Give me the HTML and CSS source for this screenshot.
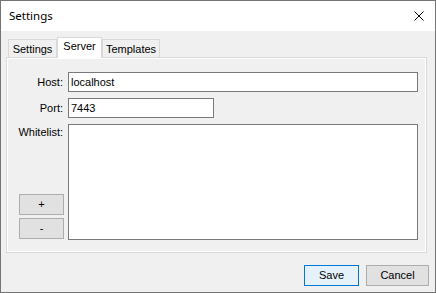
FILE: index.html
```html
<!DOCTYPE html>
<html>
<head>
<meta charset="utf-8">
<link rel="stylesheet" href="styles.css">
</head>
<body>
<div class="window">
  <div class="titlebar">
    <span class="title">Settings</span>
    <svg class="close" width="10" height="10" viewBox="0 0 10 10"><path d="M0.5 0.5L9.5 9.5M9.5 0.5L0.5 9.5" stroke="#000" stroke-width="1" fill="none"/></svg>
  </div>
  <div class="client">
    <div class="tabctl">
      <div class="tabstrip">
        <div class="tab tab-settings">Settings</div>
        <div class="tab tab-server active">Server</div>
        <div class="tab tab-templates">Templates</div>
      </div>
      <div class="panel">
        <div class="form">
          <label class="lbl">Host:</label>
          <input class="field host" type="text" value="localhost">
          <label class="lbl">Port:</label>
          <input class="field port" type="text" value="7443">
          <div class="wl-cell">
            <span class="wl-label">Whitelist:</span>
            <div class="wl-btns">
              <button class="btn small">+</button>
              <button class="btn small">-</button>
            </div>
          </div>
          <textarea class="field whitelist"></textarea>
        </div>
      </div>
    </div>
    <div class="footer">
      <button class="btn default save">Save</button>
      <button class="btn cancel">Cancel</button>
    </div>
  </div>
</div>
</body>
</html>
```
FILE: styles.css
```css
html, body {
  margin: 0;
  padding: 0;
  background: #ffffff;
}
* {
  box-sizing: border-box;
}
body {
  font-family: "Liberation Sans", Arial, sans-serif;
  font-size: 11px;
  color: #000;
}
.window {
  width: 436px;
  height: 293px;
  border: 1px solid #747474;
  display: flex;
  flex-direction: column;
  background: #f0f0f0;
}
.titlebar {
  height: 30px;
  background: #ffffff;
  display: flex;
  align-items: center;
  padding-left: 8px;
  padding-right: 11px;
}
.title {
  flex: 1;
  font-family: "Noto Sans", "Open Sans", sans-serif;
  font-size: 11.5px;
  line-height: 16px;
  margin-top: -1px;
}
.close {
  display: block;
  margin-top: -1px;
}
.client {
  flex: 1;
  display: flex;
  flex-direction: column;
  padding: 6px 6px 0 5px;
}
.tabctl {
  width: 421px;
  display: flex;
  flex-direction: column;
}
.tabstrip {
  display: flex;
  align-items: flex-end;
  height: 20px;
  padding-left: 2px;
  position: relative;
  z-index: 1;
}
.tab {
  height: 18px;
  border: 1px solid #d9d9d9;
  border-bottom: none;
  background: #f0f0f0;
  text-align: center;
  line-height: 15px;
  padding-top: 2px;
  white-space: nowrap;
}
.tab-settings { width: 49px; }
.tab-server { width: 45px; }
.tab-templates { width: 58px; }
.tab.active {
  height: 21px;
  margin-bottom: -1px;
  background: #ffffff;
  padding-top: 1px;
}
.panel {
  height: 196px;
  border: 1px solid #d9d9d9;
  box-shadow: inset 0 0 0 1px #ffffff;
  background: #f0f0f0;
  padding: 14px 8px 0 0;
}
.form {
  display: grid;
  grid-template-columns: 57px 350px;
  grid-template-rows: 20px 20px 116px;
  column-gap: 4px;
  row-gap: 6px;
}
.lbl {
  text-align: right;
  align-self: center;
  line-height: 15px;
  padding-right: 1px;
}
.field {
  font-family: inherit;
  font-size: 11px;
  color: #000;
  border: 1px solid #7a7a7a;
  background: #ffffff;
  height: 20px;
  padding: 0 2px;
  margin: 0;
  outline: none;
  border-radius: 0;
}
.host { width: 350px; }
.port { width: 146px; }
.whitelist {
  width: 350px;
  height: 116px;
  resize: none;
}
.wl-cell {
  display: flex;
  flex-direction: column;
  justify-content: space-between;
  align-items: flex-end;
}
.wl-label {
  line-height: 15px;
  padding-top: 1px;
  padding-right: 1px;
}
.wl-btns {
  display: flex;
  flex-direction: column;
  gap: 3px;
  margin-bottom: 1px;
}
.btn {
  font-family: inherit;
  font-size: 11px;
  color: #000;
  background: #e1e1e1;
  border: 1px solid #adadad;
  height: 21px;
  padding: 0;
  margin: 0;
  border-radius: 0;
  line-height: 15px;
}
.btn.small { width: 45px; }
.footer {
  display: flex;
  justify-content: flex-end;
  gap: 7px;
  padding-top: 12px;
  padding-right: 0;
}
.btn.default {
  background: #e5f1fb;
  border-color: #0078d7;
}
.save { width: 55px; }
.cancel { width: 63px; }
```
